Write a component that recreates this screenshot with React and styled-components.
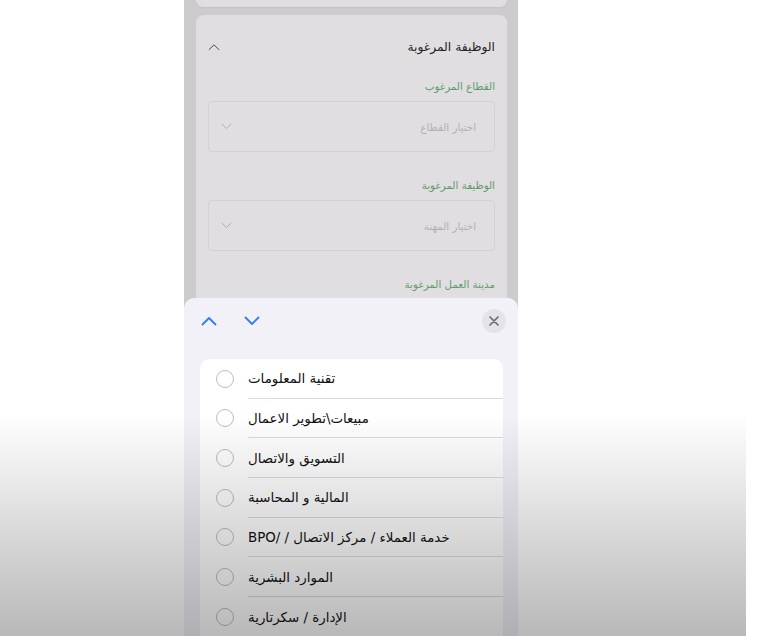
import React from "react";
import styled, { createGlobalStyle } from "styled-components";

const GlobalStyle = createGlobalStyle`
  html, body {
    margin: 0;
    padding: 0;
    background: #ffffff;
  }
  body {
    font-family: "DejaVu Sans", "Noto Sans", sans-serif;
  }
`;

const Page = styled.div`
  width: 772px;
  height: 636px;
  position: relative;
  overflow: hidden;
  background: #ffffff;
`;

const Phone = styled.div`
  margin-left: 184px;
  width: 334px;
  height: 636px;
  background: #cecbce;
  position: relative;
  overflow: hidden;
  display: flex;
  flex-direction: column;
`;

const PrevCard = styled.div`
  height: 7px;
  margin: 0 11px 0 12px;
  background: #e1dee1;
  border-radius: 0 0 8px 8px;
  box-shadow: 0 1px 2px rgba(0, 0, 0, 0.05);
`;

const Card = styled.div`
  direction: rtl;
  margin: 8px 11px 0 12px;
  padding: 0 12px;
  background: #e1dee1;
  border-radius: 8px 8px 0 0;
  flex: 1;
  display: flex;
  flex-direction: column;
`;

const CardHeader = styled.div`
  height: 64px;
  display: flex;
  align-items: center;
  justify-content: space-between;
  font-size: 12.3px;
  color: #242224;
`;

const FieldLabel = styled.div`
  font-size: 10.3px;
  line-height: 14px;
  color: #5f9d6d;
  margin-top: ${(p) => p.$top}px;
`;

const SelectBox = styled.div`
  margin-top: 8px;
  height: 51px;
  box-sizing: border-box;
  border: 1px solid #d4d1d4;
  border-radius: 4px;
  display: flex;
  align-items: center;
  justify-content: space-between;
  padding: 0 18px 0 12px;
  font-size: 10.3px;
  color: #b3b0b3;
`;

const Sheet = styled.div`
  position: absolute;
  left: 0;
  right: 0;
  top: 298px;
  bottom: 0;
  background: #f2f1f8;
  border-radius: 10px 10px 0 0;
  display: flex;
  flex-direction: column;
`;

const Toolbar = styled.div`
  height: 46px;
  display: flex;
  align-items: center;
  padding: 0 12px 0 17px;
`;

const NavButton = styled.div`
  width: 16px;
  height: 10px;
  display: flex;
  margin-right: ${(p) => p.$gap || 0}px;
  svg {
    display: block;
  }
`;

const CloseButton = styled.div`
  margin-left: auto;
  width: 24px;
  height: 24px;
  border-radius: 50%;
  background: #e3e3ea;
  display: flex;
  align-items: center;
  justify-content: center;
`;

const List = styled.div`
  margin: 15px 15px 0 16px;
  background: #ffffff;
  border-radius: 10px 10px 0 0;
  overflow: hidden;
`;

const Row = styled.div`
  height: 39.67px;
  display: flex;
  align-items: center;
`;

const Radio = styled.div`
  width: 18px;
  height: 18px;
  box-sizing: border-box;
  border: 1.3px solid #bdbdc2;
  border-radius: 50%;
  margin: 0 14px 0 16px;
  flex-shrink: 0;
`;

const RowText = styled.div`
  flex: 1;
  height: 100%;
  display: flex;
  align-items: center;
  justify-content: flex-end;
  direction: rtl;
  font-size: 13.4px;
  color: #111113;
  border-bottom: ${(p) => (p.$last ? "none" : "1px solid #dcdce0")};
  box-sizing: border-box;
  padding-top: 1px;
`;

const VideoShade = styled.div`
  position: absolute;
  left: 0;
  top: 415px;
  width: 746px;
  bottom: 0;
  pointer-events: none;
  background: linear-gradient(
    to bottom,
    rgba(0, 0, 0, 0) 0%,
    rgba(0, 0, 0, 0.06) 20%,
    rgba(0, 0, 0, 0.14) 50%,
    rgba(0, 0, 0, 0.28) 100%
  );
`;

const Chevron = ({ up, color = "#2f7ef5", width = 16, height = 10, stroke = 1.8 }) => (
  <svg width={width} height={height} viewBox="0 0 16 10" fill="none">
    <polyline
      points={up ? "1.5,8.5 8,2 14.5,8.5" : "1.5,1.5 8,8 14.5,1.5"}
      stroke={color}
      strokeWidth={stroke}
      strokeLinecap="round"
      strokeLinejoin="round"
    />
  </svg>
);

const options = [
  "تقنية المعلومات",
  "مبيعات\\تطوير الاعمال",
  "التسويق والاتصال",
  "المالية و المحاسبة",
  "خدمة العملاء / مركز الاتصال / /BPO",
  "الموارد البشرية",
  "الإدارة / سكرتارية",
];

const App = () => {
  return (
    <Page>
      <GlobalStyle />
      <Phone>
        <PrevCard />
        <Card>
          <CardHeader>
            <span>الوظيفة المرغوبة</span>
            <Chevron up color="#3a383a" width={12} height={8} stroke={1.2} />
          </CardHeader>
          <FieldLabel $top={0}>القطاع المرغوب</FieldLabel>
          <SelectBox>
            <span>اختيار القطاع</span>
            <Chevron color="#9a979a" width={11} height={7} stroke={1} />
          </SelectBox>
          <FieldLabel $top={26}>الوظيفة المرغوبة</FieldLabel>
          <SelectBox>
            <span>اختيار المهنة</span>
            <Chevron color="#9a979a" width={11} height={7} stroke={1} />
          </SelectBox>
          <FieldLabel $top={26}>مدينة العمل المرغوبة</FieldLabel>
        </Card>
        <Sheet>
          <Toolbar>
            <NavButton $gap={27}>
              <Chevron up />
            </NavButton>
            <NavButton>
              <Chevron />
            </NavButton>
            <CloseButton>
              <svg width="10" height="10" viewBox="0 0 10 10">
                <path
                  d="M1 1 L9 9 M9 1 L1 9"
                  stroke="#6b6b70"
                  strokeWidth="1.7"
                  strokeLinecap="round"
                />
              </svg>
            </CloseButton>
          </Toolbar>
          <List>
            {options.map((o, i) => (
              <Row key={o}>
                <Radio />
                <RowText $last={i === options.length - 1}>
                  <span dir="rtl">{o}</span>
                </RowText>
              </Row>
            ))}
          </List>
        </Sheet>
      </Phone>
      <VideoShade />
    </Page>
  );
};

export default App;
